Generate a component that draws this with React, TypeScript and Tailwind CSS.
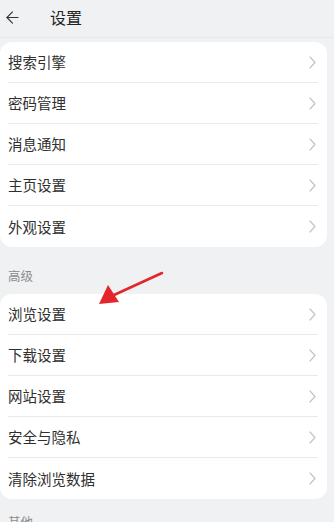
import { ArrowLeft } from "lucide-react";

const basic = ["搜索引擎", "密码管理", "消息通知", "主页设置", "外观设置"];
const advanced = ["浏览设置", "下载设置", "网站设置", "安全与隐私", "清除浏览数据"];

function Chevron() {
  return (
    <svg width="7" height="13" viewBox="0 0 7 13" fill="none">
      <polyline points="1,1 6,6.5 1,12" stroke="#c2c4c6" strokeWidth="1.2" strokeLinecap="round" strokeLinejoin="round" />
    </svg>
  );
}

function Card({ items }: { items: string[] }) {
  return (
    <div className="mr-[7px] rounded-xl bg-white">
      {items.map((label, i) => (
        <div key={label} className="ml-2 mr-[9px]">
          <div
            className={`flex h-[41px] items-center justify-between pr-[2px] ${
              i < items.length - 1 ? "border-b border-[#e8e9eb]" : ""
            }`}
          >
            <span className="text-[14.5px] text-[#2f2f2f]">{label}</span>
            <Chevron />
          </div>
        </div>
      ))}
    </div>
  );
}

export default function App() {
  return (
    <div
      className="relative h-[522px] w-[334px] overflow-hidden bg-[#eff1f3]"
      style={{ fontFamily: '"Noto Sans CJK SC", "Noto Sans", sans-serif' }}
    >
      {/* Header */}
      <div className="flex h-[38px] items-center border-b border-[#e6e8ea] bg-[#eff1f2] pb-[3px]">
        <ArrowLeft className="ml-[3px] h-[19px] w-[19px] text-[#333]" strokeWidth={1.4} />
        <span className="ml-[28px] text-[16px] text-[#222]">设置</span>
      </div>

      <div className="pt-[4px]">
        <Card items={basic} />
      </div>

      <div className="pl-2 pt-[20px] pb-[10px] text-[12.5px] leading-[17px] text-[#8a8c8e]">高级</div>
      <Card items={advanced} />

      <div className="pl-2 pt-[14px] text-[12.5px] text-[#8a8c8e]">其他</div>

      {/* Red pointer arrow */}
      <svg className="absolute left-0 top-0" width="334" height="522" viewBox="0 0 334 522">
        <line x1="162" y1="273" x2="114" y2="295" stroke="#e3262b" strokeWidth="2.6" strokeLinecap="round" />
        <polygon points="99,304 108,285 119,302" fill="#e3262b" />
      </svg>
    </div>
  );
}
